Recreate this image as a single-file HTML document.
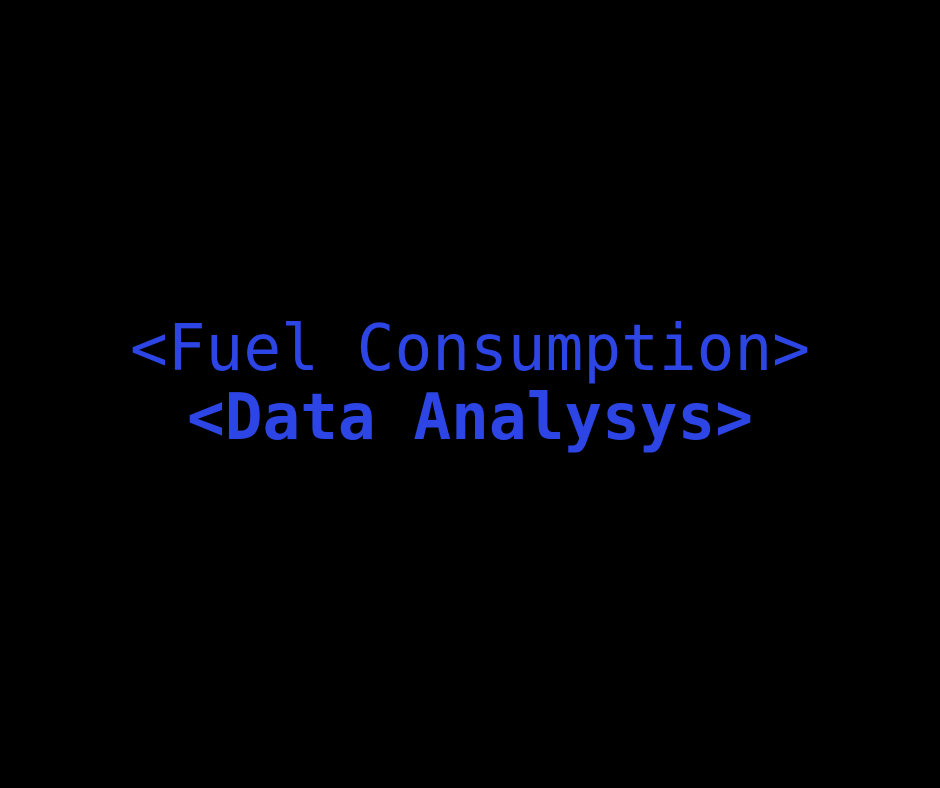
<!DOCTYPE html>
<html><head><style>html,body{margin:0;background:#000;width:940px;height:788px;overflow:hidden}</style></head>
<body>
<svg width="940" height="788" style="display:block">
<rect width="940" height="788" fill="#000"/>
<text x="130" y="370" font-family="DejaVu Sans Mono, monospace" font-size="64" fill="#2c45e4" textLength="680" lengthAdjust="spacingAndGlyphs">&lt;Fuel Consumption&gt;</text>
<text x="187" y="439" font-family="DejaVu Sans Mono, monospace" font-weight="bold" font-size="64" fill="#2c45e4" textLength="566" lengthAdjust="spacingAndGlyphs">&lt;Data Analysys&gt;</text>
</svg>
</body></html>
